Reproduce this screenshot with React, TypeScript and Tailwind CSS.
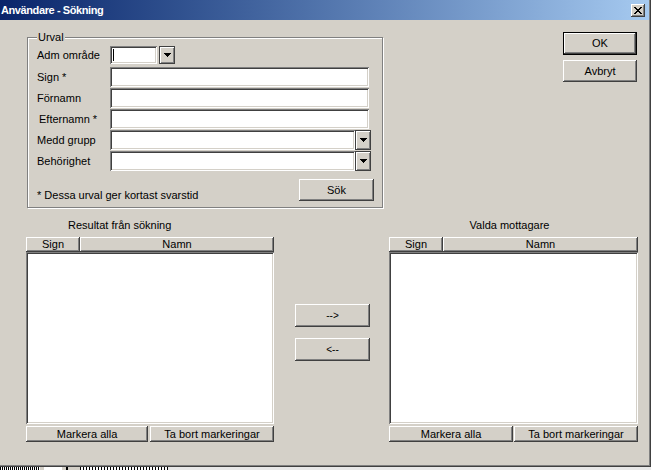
import React from "react";

const raised =
  "bg-[#d4d0c8] shadow-[inset_-1px_-1px_#404040,inset_1px_1px_#ffffff,inset_-2px_-2px_#808080,inset_2px_2px_#d4d0c8]";
const sunken =
  "bg-white shadow-[inset_1px_1px_#808080,inset_-1px_-1px_#ffffff,inset_2px_2px_#404040,inset_-2px_-2px_#d4d0c8]";

function Arrow() {
  return (
    <svg width="7" height="4" viewBox="0 0 7 4">
      <path d="M0 0h7v1h-1v1h-1v1h-1v1h-1v-1h-1v-1h-1v-1h-1z" fill="#000" />
    </svg>
  );
}

function DropBtn({ h }: { h: string }) {
  return (
    <div
      className={`w-[16px] ${h} flex items-center justify-center bg-[#d4d0c8] border border-[#404040] shadow-[inset_1px_1px_#ffffff,inset_-1px_-1px_#808080]`}
    >
      <Arrow />
    </div>
  );
}

function Row({
  label,
  children,
  extra,
  labelClass,
}: {
  label: string;
  children: React.ReactNode;
  extra?: string;
  labelClass?: string;
}) {
  return (
    <div className={`flex items-center h-[20px] ${extra ?? ""}`}>
      <div className={`w-[73px] leading-none ${labelClass ?? ""}`}>{label}</div>
      {children}
    </div>
  );
}

function ListPanel({
  title,
  titleClass,
  btnW,
  gap,
}: {
  title: string;
  titleClass: string;
  btnW: string;
  gap: string;
}) {
  return (
    <div className="flex flex-col w-full">
      <div className={`h-[14px] leading-[14px] ${titleClass}`}>{title}</div>
      <div className="flex h-[15px] mt-[5px]">
        <div className={`${raised} w-[54px] h-full flex items-center justify-center leading-none`}>
          Sign
        </div>
        <div className={`${raised} flex-1 h-full flex items-center justify-center leading-none`}>
          Namn
        </div>
      </div>
      <div className={`${sunken} h-[172px]`} />
      <div className={`flex mt-[2px] h-[16px] ${gap}`}>
        <div className={`${raised} ${btnW} h-full flex items-center justify-center leading-none`}>
          Markera alla
        </div>
        <div className={`${raised} flex-1 h-full flex items-center justify-center leading-none`}>
          Ta bort markeringar
        </div>
      </div>
    </div>
  );
}

export default function App() {
  return (
    <div
      className="w-[651px] h-[470px] flex flex-col bg-[#d4d0c8] overflow-hidden text-[11px] text-black"
      style={{ fontFamily: '"Liberation Sans", Arial, sans-serif' }}
    >
      <div className="h-[467px] flex flex-col border-r border-b border-[#404040] shadow-[inset_-1px_-1px_#808080]">
        {/* title bar */}
        <div className="h-[20px] mr-[1px] flex items-center pl-[1px] pr-[4px] bg-gradient-to-r from-[#0a246a] to-[#a6caf0]">
          <span className="text-white font-bold text-[11px] leading-none tracking-[-0.4px]">
            Användare - Sökning
          </span>
          <div
            className={`${raised} ml-auto w-[14px] h-[13px] flex items-center justify-center`}
          >
            <svg width="8" height="7" viewBox="0 0 8 7">
              <path
                d="M0 0h2v1h1v1h2v-1h1v-1h2v1h-1v1h-1v1h-1v1h1v1h1v1h1v1h-2v-1h-1v-1h-2v1h-1v1h-2v-1h1v-1h1v-1h1v-1h-1v-1h-1v-1h-1z"
                fill="#000"
              />
            </svg>
          </div>
        </div>

        {/* top area */}
        <div className="flex items-start">
          <div className="relative ml-[27px] mt-[17px] w-[356px] h-[171px] border border-[#808080] shadow-[inset_1px_1px_#ffffff,1px_1px_#ffffff] pt-[8px] pl-[9px] flex flex-col">
            <span className="absolute -top-[7px] left-[9px] px-[1px] bg-[#d4d0c8] leading-[13px]">
              Urval
            </span>
            <div className="flex items-center h-[18px]">
              <div className="w-[73px] leading-none">Adm område</div>
              <div className={`${sunken} w-[47px] h-[18px] flex items-center pl-[3px]`}>
                <div className="w-[1px] h-[12px] bg-black" />
              </div>
              <div className="ml-[2px]">
                <DropBtn h="h-[18px]" />
              </div>
            </div>
            <Row label="Sign *" extra="mt-[3px]">
              <div className={`${sunken} w-[259px] h-[20px]`} />
            </Row>
            <Row label="Förnamn" extra="mt-[1px]">
              <div className={`${sunken} w-[259px] h-[20px]`} />
            </Row>
            <Row label="Efternamn *" extra="mt-[1px]" labelClass="pl-[2px]">
              <div className={`${sunken} w-[259px] h-[20px]`} />
            </Row>
            <Row label="Medd grupp" extra="mt-[1px]">
              <div className={`${sunken} w-[245px] h-[20px]`} />
              <DropBtn h="h-[20px]" />
            </Row>
            <Row label="Behörighet" extra="mt-[1px]">
              <div className={`${sunken} w-[245px] h-[20px]`} />
              <DropBtn h="h-[20px]" />
            </Row>
            <div className="flex items-start mt-[8px] mr-[8px]">
              <div className="pt-[11px] leading-none">* Dessa urval ger kortast svarstid</div>
              <div
                className={`${raised} ml-auto w-[75px] h-[22px] flex items-center justify-center leading-none`}
              >
                Sök
              </div>
            </div>
          </div>

          <div className="ml-[180px] mt-[12px] flex flex-col">
            <div className="w-[74px] h-[23px] border border-black">
              <div
                className={`${raised} w-full h-full flex items-center justify-center leading-none`}
              >
                OK
              </div>
            </div>
            <div
              className={`${raised} mt-[5px] w-[74px] h-[22px] flex items-center justify-center leading-none`}
            >
              Avbryt
            </div>
          </div>
        </div>

        {/* lower area */}
        <div className="flex items-start mt-[10px] ml-[26px]">
          <div className="w-[248px]">
            <ListPanel
              title="Resultat från sökning"
              titleClass="pl-[42px]"
              btnW="w-[122px]"
              gap="gap-[2px]"
            />
          </div>
          <div className="ml-[21px] mt-[86px] flex flex-col">
            <div
              className={`${raised} w-[75px] h-[23px] flex items-center justify-center leading-none text-[10px]`}
            >
              --&gt;
            </div>
            <div
              className={`${raised} mt-[11px] w-[75px] h-[23px] flex items-center justify-center leading-none text-[10px]`}
            >
              &lt;--
            </div>
          </div>
          <div className="ml-[19px] w-[249px]">
            <ListPanel
              title="Valda mottagare"
              titleClass="text-center pr-[8px]"
              btnW="w-[124px]"
              gap="gap-[1px]"
            />
          </div>
        </div>
      </div>
      {/* fragment of window behind */}
      <div className="h-[3px] flex items-start bg-[#d4d0c8]">
        <div className="w-[40px] h-[3px] bg-[repeating-linear-gradient(90deg,#000_0_1px,#fff_1px_2px)]" />
        <div className="w-[18px] h-[3px] bg-white ml-[4px]" />
        <div className="w-[2px] h-[3px] bg-black ml-[4px]" />
        <div className="w-[88px] h-[3px] ml-[12px] bg-[repeating-linear-gradient(90deg,#000_0_1px,#fff_1px_3px)]" />
        <div className="flex-1 h-[3px] bg-[#e8e8e8]" />
      </div>
    </div>
  );
}
